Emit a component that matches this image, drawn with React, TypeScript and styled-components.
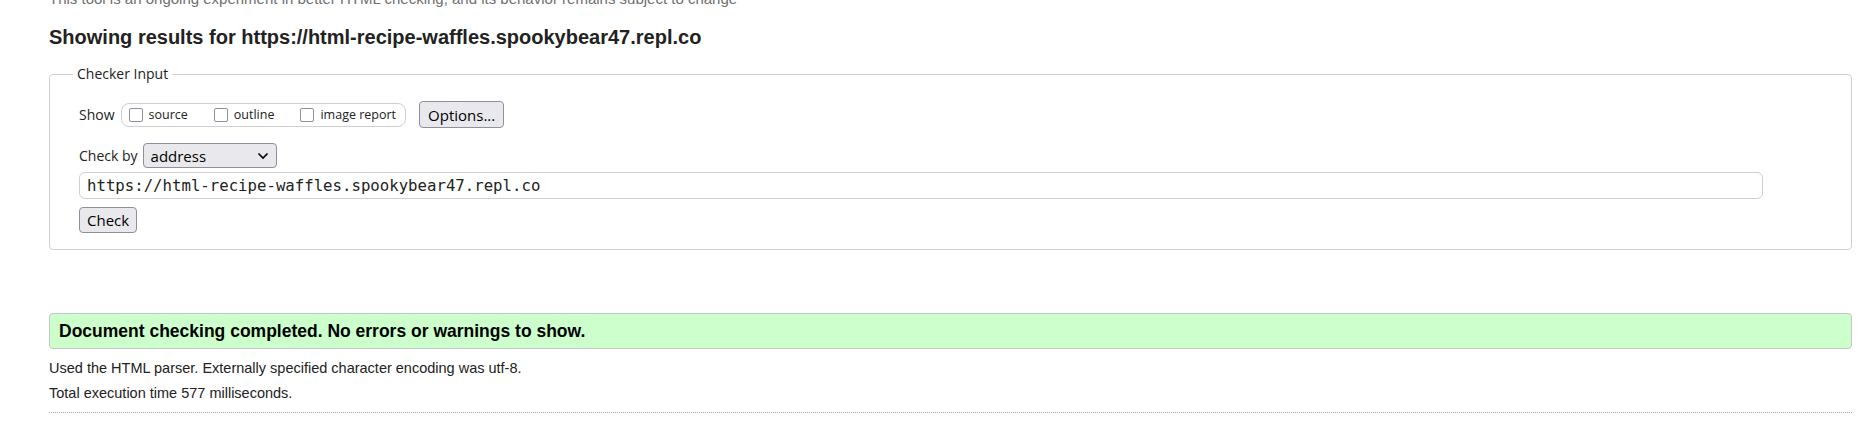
import React from 'react'
import styled, { createGlobalStyle } from 'styled-components'

const GlobalStyle = createGlobalStyle`
  body {
    margin: 0;
    background: #fff;
    overflow: hidden;
  }
`

const url = 'https://html-recipe-waffles.spookybear47.repl.co'

const options = ['source', 'outline', 'image report']

const App = () => {
  return (
    <Page>
      <GlobalStyle />
      <Intro>
        This tool is an ongoing experiment in better HTML checking, and its behavior remains subject to change
      </Intro>
      <Heading>Showing results for {url}</Heading>

      <CheckerFieldset>
        <CheckerLegend>Checker Input</CheckerLegend>
        <FormRow>
          <FieldLabel>Show</FieldLabel>
          <CheckGroup>
            {options.map((name) => (
              <CheckItem key={name}>
                <Checkbox type="checkbox" />
                {name}
              </CheckItem>
            ))}
          </CheckGroup>
          <FormButton $wide>Options...</FormButton>
        </FormRow>
        <FormRow $top={15}>
          <FieldLabel>Check by</FieldLabel>
          <SelectWrap>
            <ModeSelect defaultValue="address">
              <option value="address">address</option>
              <option value="file">file upload</option>
              <option value="text">text input</option>
            </ModeSelect>
            <Chevron width="12" height="8" viewBox="0 0 12 8">
              <path d="M1.5 1.5 L6 6 L10.5 1.5" fill="none" stroke="#000" strokeWidth="1.6" />
            </Chevron>
          </SelectWrap>
        </FormRow>
        <UrlInput type="text" defaultValue={url} />
        <FormRow $top={8}>
          <FormButton>Check</FormButton>
        </FormRow>
      </CheckerFieldset>

      <SuccessBox>Document checking completed. No errors or warnings to show.</SuccessBox>
      <InfoLine>Used the HTML parser. Externally specified character encoding was utf-8.</InfoLine>
      <InfoLine $top={9}>Total execution time 577 milliseconds.</InfoLine>
      <Divider />
    </Page>
  )
}

export default App

const Page = styled.div`
  padding: 0 10px 0 49px;
  font-family: 'Liberation Sans', Arial, sans-serif;
  color: #222;
`

const Intro = styled.p`
  margin: -9px 0 0;
  font-size: 15px;
  line-height: 16px;
  color: #6f6f6f;
  white-space: nowrap;
`

const Heading = styled.h2`
  margin: 19px 0 0;
  font-size: 20px;
  line-height: 22px;
  font-weight: bold;
  color: #222;
`

const CheckerFieldset = styled.fieldset`
  margin: 17px 0 0;
  padding: 18px 88px 16px 29px;
  border: 1px solid #cfcfcf;
  border-radius: 4px;
  min-width: 0;
  font-family: 'Open Sans', 'Noto Sans', sans-serif;
`

const CheckerLegend = styled.legend`
  margin-left: -6px;
  padding: 0 4px;
  font-size: 14px;
  line-height: 18px;
  color: #222;
`

const FormRow = styled.div<{ $top?: number }>`
  display: flex;
  align-items: center;
  margin-top: ${(p) => p.$top ?? 0}px;
`

const FieldLabel = styled.span`
  font-size: 14px;
  color: #222;
  margin-right: 5px;
`

const CheckGroup = styled.div`
  display: flex;
  align-items: center;
  gap: 26px;
  height: 22px;
  padding: 0 9px 0 7px;
  margin-left: 1px;
  border: 1px solid #cfcfcf;
  border-radius: 8px;
`

const CheckItem = styled.label`
  display: flex;
  align-items: center;
  gap: 6px;
  font-size: 12.5px;
  color: #222;
`

const Checkbox = styled.input`
  appearance: none;
  margin: 0;
  width: 14px;
  height: 14px;
  border: 1px solid #8f8f9d;
  border-radius: 2px;
  background: #fff;
`

const FormButton = styled.button<{ $wide?: boolean }>`
  height: ${(p) => (p.$wide ? 27 : 26)}px;
  margin-left: ${(p) => (p.$wide ? 13 : 0)}px;
  padding: 0 ${(p) => (p.$wide ? 8 : 7)}px;
  background: #e9e9ed;
  border: 1px solid #8f8f9d;
  border-radius: 4px;
  font-family: 'Open Sans', 'Noto Sans', sans-serif;
  font-size: 15px;
  color: #000;
`

const SelectWrap = styled.div`
  position: relative;
  width: 134px;
  height: 25px;
`

const ModeSelect = styled.select`
  appearance: none;
  width: 100%;
  height: 100%;
  padding: 0 24px 0 7px;
  background: #e9e9ed;
  border: 1px solid #8f8f9d;
  border-radius: 4px;
  font-family: 'Open Sans', 'Noto Sans', sans-serif;
  font-size: 15px;
  color: #000;
`

const Chevron = styled.svg`
  position: absolute;
  right: 8px;
  top: 9px;
  pointer-events: none;
`

const UrlInput = styled.input`
  display: block;
  box-sizing: border-box;
  width: 100%;
  height: 27px;
  margin: 4px 0 0;
  padding: 0 7px;
  border: 1px solid #cfcfcf;
  border-radius: 6px;
  font-family: 'DejaVu Sans Mono', 'Liberation Mono', monospace;
  font-size: 15.7px;
  color: #222;
`

const SuccessBox = styled.div`
  margin-top: 63px;
  height: 34px;
  padding: 0 9px;
  display: flex;
  align-items: center;
  background: #ccffcc;
  border: 1px solid #c6c6c6;
  border-radius: 4px;
  font-size: 17.5px;
  font-weight: bold;
  color: #000;
`

const InfoLine = styled.p<{ $top?: number }>`
  margin: ${(p) => p.$top ?? 11}px 0 0;
  font-size: 14.5px;
  line-height: 16px;
  color: #222;
`

const Divider = styled.hr`
  margin: 11px 0 0;
  border: none;
  border-top: 1px dotted #aaa;
`
